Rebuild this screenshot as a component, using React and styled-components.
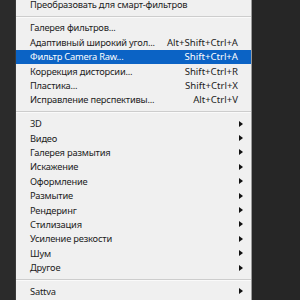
import React from 'react';
import styled, { createGlobalStyle } from 'styled-components';

const Global = createGlobalStyle`
  html, body {
    margin: 0;
    padding: 0;
    background: #272727;
    overflow: hidden;
  }
  body {
    font-family: "Noto Sans", "Open Sans", sans-serif;
  }
`;

const S = {
  Screen: styled.div`
    width: 300px;
    height: 300px;
    display: flex;
    overflow: hidden;
  `,
  LeftPanel: styled.div`
    width: 15px;
    flex-shrink: 0;
    background: #2b2b2b;
    border-right: 1px solid #3a3a3a;
  `,
  Menu: styled.ul`
    width: 235px;
    flex-shrink: 0;
    margin: -3px 0 0;
    padding: 0;
    list-style: none;
    background: #f0f0f0;
    border-right: 1px solid #9a9a9a;
    align-self: flex-start;
  `,
  Item: styled.li`
    height: 14.4px;
    display: flex;
    align-items: center;
    padding: 0 4px 0 14px;
    font-size: 9.6px;
    color: ${p => (p.$active ? '#ffffff' : '#1c1c1c')};
    background: ${p => (p.$active ? '#0b63c5' : 'transparent')};
    white-space: nowrap;
  `,
  Label: styled.span`
    flex: 1;
    font-size: 9.3px;
    letter-spacing: -0.2px;
  `,
  Shortcut: styled.span`
    padding-right: 9px;
  `,
  Arrow: styled.span`
    width: 0;
    height: 0;
    margin-right: 4px;
    border-top: 3.5px solid transparent;
    border-bottom: 3.5px solid transparent;
    border-left: 4px solid #111;
  `,
  Separator: styled.li`
    height: 9.4px;
    display: flex;
    align-items: center;
    &::before {
      content: '';
      display: block;
      width: 100%;
      height: 1px;
      background: #cdcdcd;
      box-shadow: 0 1px 0 #fafafa;
    }
  `,
  Workspace: styled.div`
    flex: 1;
    background: #262626;
  `,
};

const MENU = [
  { label: 'Преобразовать для смарт-фильтров' },
  'sep',
  { label: 'Галерея фильтров...' },
  { label: 'Адаптивный широкий угол...', shortcut: 'Alt+Shift+Ctrl+A' },
  { label: 'Фильтр Camera Raw...', shortcut: 'Shift+Ctrl+A', active: true },
  { label: 'Коррекция дисторсии...', shortcut: 'Shift+Ctrl+R' },
  { label: 'Пластика...', shortcut: 'Shift+Ctrl+X' },
  { label: 'Исправление перспективы...', shortcut: 'Alt+Ctrl+V' },
  'sep',
  { label: '3D', sub: true },
  { label: 'Видео', sub: true },
  { label: 'Галерея размытия', sub: true },
  { label: 'Искажение', sub: true },
  { label: 'Оформление', sub: true },
  { label: 'Размытие', sub: true },
  { label: 'Рендеринг', sub: true },
  { label: 'Стилизация', sub: true },
  { label: 'Усиление резкости', sub: true },
  { label: 'Шум', sub: true },
  { label: 'Другое', sub: true },
  'sep',
  { label: 'Sattva', sub: true },
  { label: 'Topaz Labs', sub: true },
];

const App = () => (
  <S.Screen>
    <Global />
    <S.LeftPanel />
    <S.Menu>
      {MENU.map((item, index) =>
        item === 'sep' ? (
          <S.Separator key={index} />
        ) : (
          <S.Item key={item.label} $active={item.active}>
            <S.Label>{item.label}</S.Label>
            {item.shortcut && <S.Shortcut>{item.shortcut}</S.Shortcut>}
            {item.sub && <S.Arrow />}
          </S.Item>
        )
      )}
    </S.Menu>
    <S.Workspace />
  </S.Screen>
);

export default App;
